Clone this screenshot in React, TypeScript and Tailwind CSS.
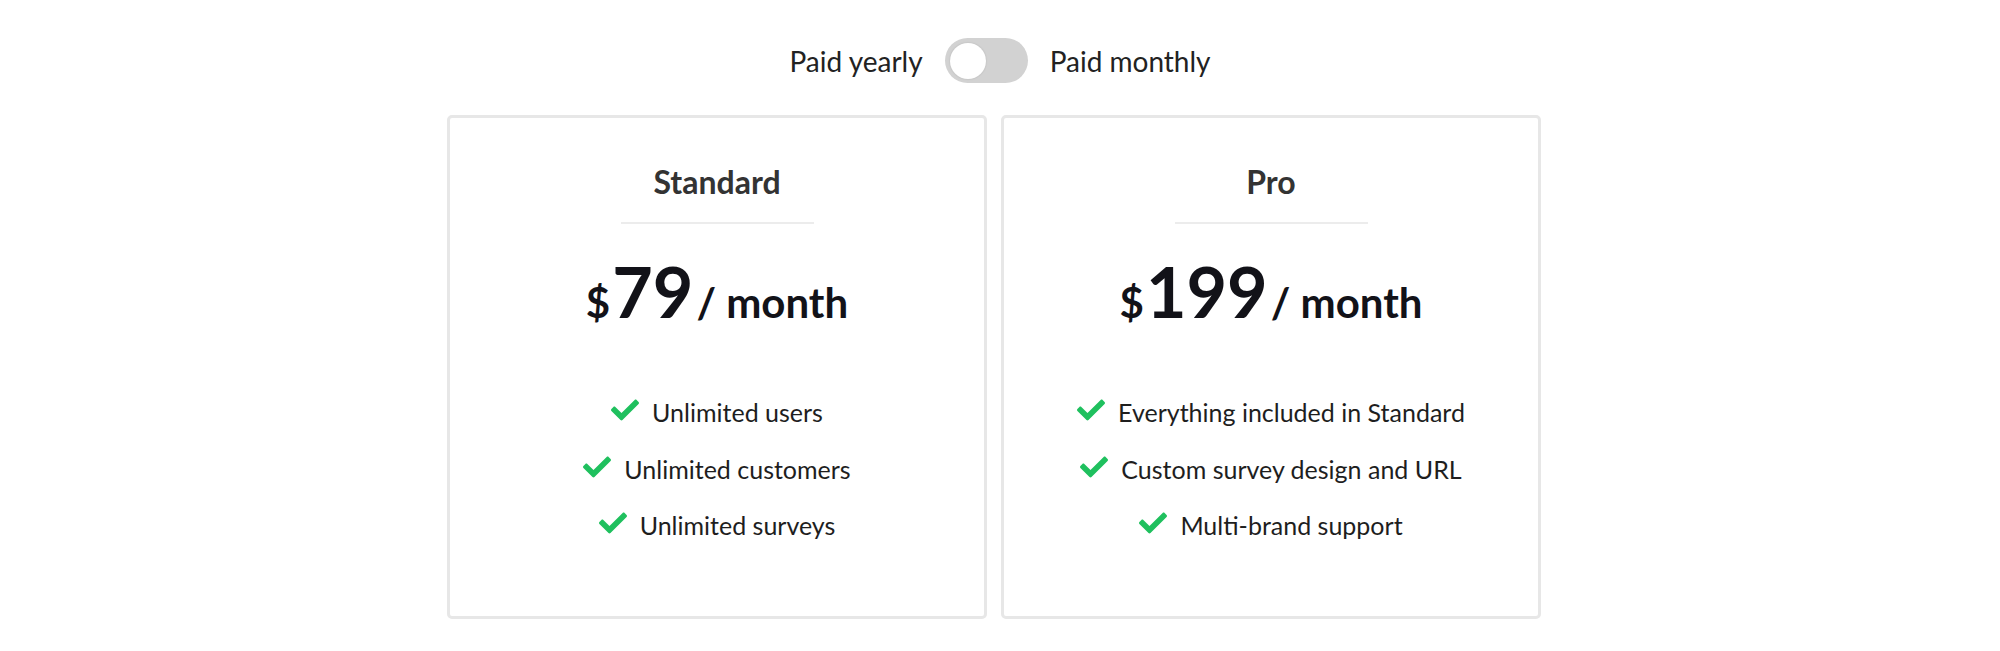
import { FC } from "react"
import { FaCheck } from "react-icons/fa"

type Plan = {
  name: string
  price: string
  features: string[]
}

const plans: Plan[] = [
  {
    name: "Standard",
    price: "79",
    features: ["Unlimited users", "Unlimited customers", "Unlimited surveys"],
  },
  {
    name: "Pro",
    price: "199",
    features: ["Everything included in Standard", "Custom survey design and URL", "Multi-brand support"],
  },
]

const Toggle: FC = () => {
  return (
    <div className="flex h-[45px] w-[83px] items-center rounded-full bg-[#d2d2d2] px-[5px]">
      <div className="h-[36px] w-[36px] rounded-full bg-white shadow-[0_0_2px_rgba(0,0,0,0.15)]" />
    </div>
  )
}

const PlanCard: FC<{ plan: Plan }> = ({ plan }) => {
  return (
    <div className="flex h-[504px] w-[540px] flex-col items-center rounded-[5px] border-[3px] border-[#e7e7e7] bg-white pt-[46px]">
      <div className="text-[32px] font-bold leading-[36px] text-[#333333]">{plan.name}</div>
      <div className="mt-[22px] h-[2px] w-[193px] bg-[#ececec]" />

      <div className="mt-[32px] flex items-baseline justify-center font-bold leading-none text-[#121218]">
        <span className="mr-[2px] text-[42px]">$</span>
        <span className="text-[70px]">{plan.price}</span>
        <span className="ml-[3px] text-[42px]">/ month</span>
      </div>

      <div className="mt-[58px] flex flex-col items-center">
        {plan.features.map((f) => (
          <div key={f} className="flex h-[56.5px] items-center gap-[13px]">
            <FaCheck size={28} className="mb-[4px] text-[#1fc05e]" />
            <span className="text-[25px] leading-[56.5px] text-[#1e1e1e]">{f}</span>
          </div>
        ))}
      </div>
    </div>
  )
}

export default function App() {
  return (
    <div className="h-[651px] w-full bg-white font-['Lato',_'Open_Sans',_sans-serif]">
      <div className="flex items-center justify-center gap-[22px] pt-[38px] text-[28px] text-[#222222]">
        <span>Paid yearly</span>
        <Toggle />
        <span>Paid monthly</span>
      </div>

      <div className="mt-[32px] flex justify-center gap-[14px] pr-[12px]">
        {plans.map((p) => (
          <PlanCard key={p.name} plan={p} />
        ))}
      </div>
    </div>
  )
}
